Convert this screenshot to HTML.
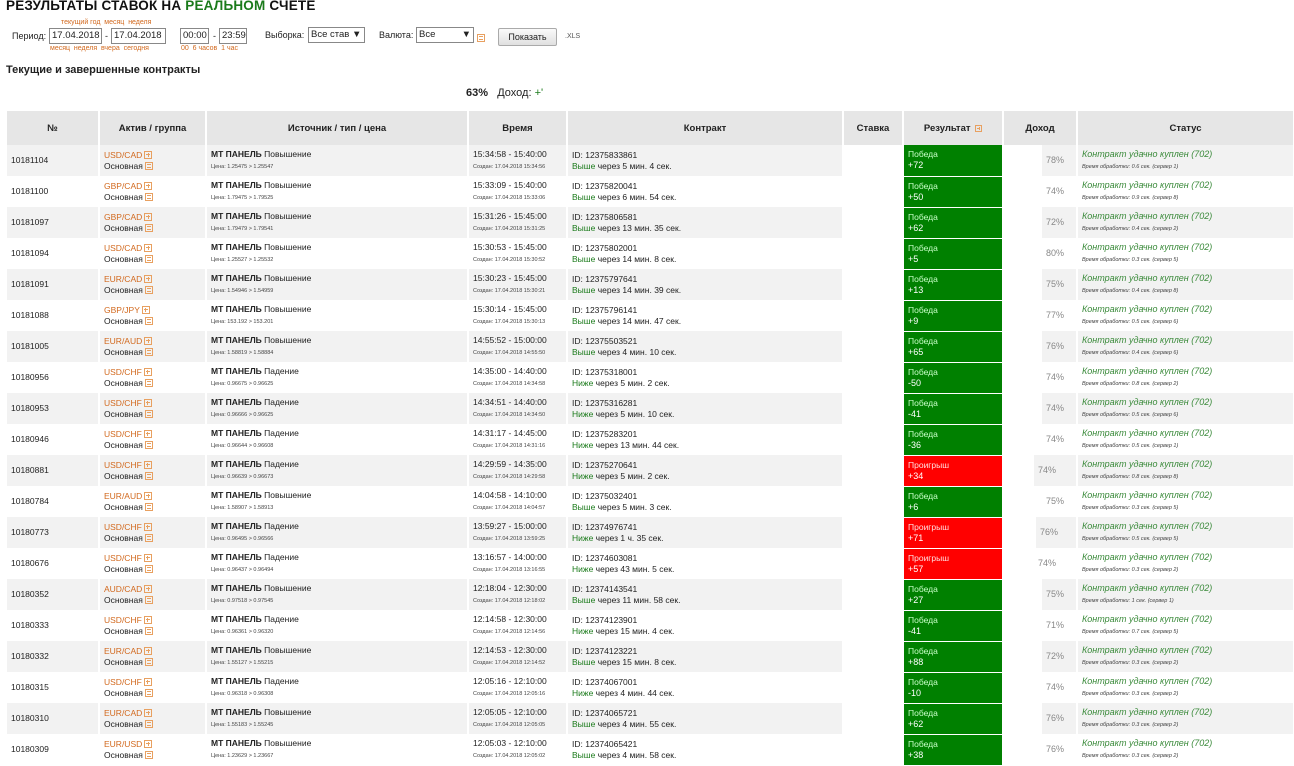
<!DOCTYPE html>
<html><head><meta charset="utf-8">
<style>
*{margin:0;padding:0;box-sizing:border-box}
body{width:1294px;height:763px;overflow:hidden;background:#fff;font-family:"Liberation Sans",Arial,sans-serif;color:#222;position:relative}
.abs{position:absolute;white-space:nowrap}
h1{position:absolute;left:6px;top:-2px;font-size:13.5px;font-weight:bold;color:#111;letter-spacing:0.2px}
h1 span{color:#1a7a1a}
.inp{position:absolute;height:16px;border:1px solid #888;background:#fff;font-size:9.5px;padding:1px 2px;line-height:12px}
.or{color:#d2691e;font-size:7px}
.btn{position:absolute;left:498px;top:28px;width:59px;height:18px;border:1px solid #aaa;border-radius:2px;background:linear-gradient(#fafafa,#e0e0e0);font-size:9px;text-align:center;line-height:16px}
table{position:absolute;left:7px;top:111px;border-collapse:collapse;table-layout:fixed;width:1287px}
th{height:34px;background:#e6e6e6;font-size:9.5px;font-weight:bold;border-right:2px solid #fff;color:#222}
td{height:31px;font-size:8.5px;line-height:11px;vertical-align:middle;padding:0 3px 0 4px;border-right:2px solid #fff;white-space:nowrap;overflow:hidden}
tr.g td{background:#f2f2f2}
td.s{background:#fff!important}
td.w{background:#008000!important;color:#c8ffc8;border-bottom:1px solid #fff}
td.l{background:#ff0000!important;color:#ffe0e0;border-bottom:1px solid #fff}
td.w b,td.l b{font-weight:normal;color:#fff;font-size:9px}
td.d{padding:0;position:relative;color:#888;font-size:9px}
td.d i{position:absolute;left:0;top:0;width:38px;height:31px;background:#fff}
td.d span{position:absolute;left:42px;top:10px}
.a{color:#d2691e}
.ic,.ip{display:inline-block;width:8px;height:8px;border:1px solid #e8a060;margin-left:2px;vertical-align:-1px;position:relative;background:transparent}
.ic:before{content:"";position:absolute;left:1px;right:1px;top:1px;height:1px;background:#e8a060}
.ic:after{content:"";position:absolute;left:1px;right:1px;top:4px;height:1px;background:#e8a060}
.ip:before{content:"";position:absolute;left:1px;right:1px;top:2.5px;height:1px;background:#e8a060}
.ip:after{content:"";position:absolute;top:1px;bottom:1px;left:2.5px;width:1px;background:#e8a060}
.sm{font-size:5.5px;color:#444}
.gr{color:#1a7a1a}
.st{color:#3a8a3a;font-style:italic;font-size:9px}
.st2{font-style:italic;font-size:5.5px;color:#444}
</style></head><body>
<h1>РЕЗУЛЬТАТЫ СТАВОК НА <span>РЕАЛЬНОМ</span> СЧЕТЕ</h1>
<div class="abs or" style="left:61px;top:19px">текущий год &nbsp;месяц &nbsp;неделя</div>
<div class="abs" style="left:12px;top:31px;font-size:9px">Период:</div>
<div class="inp" style="left:49px;top:28px;width:53px">17.04.2018</div>
<div class="abs" style="left:105px;top:31px;font-size:9px">-</div>
<div class="inp" style="left:111px;top:28px;width:55px">17.04.2018</div>
<div class="abs or" style="left:50px;top:45px">месяц &nbsp;неделя &nbsp;вчера &nbsp;сегодня</div>
<div class="inp" style="left:180px;top:28px;width:29px">00:00</div>
<div class="abs" style="left:213px;top:31px;font-size:9px">-</div>
<div class="inp" style="left:219px;top:28px;width:28px">23:59</div>
<div class="abs or" style="left:181px;top:45px">00 &nbsp;6 часов &nbsp;1 час</div>
<div class="abs" style="left:265px;top:30px;font-size:9px">Выборка:</div>
<div class="inp" style="left:308px;top:27px;width:57px">Все став ▼</div>
<div class="abs" style="left:379px;top:30px;font-size:9px">Валюта:</div>
<div class="inp" style="left:416px;top:27px;width:58px">Все <span style="float:right">▼</span></div>
<div class="abs" style="left:475px;top:28px"><span class="ic"></span></div>
<div class="btn">Показать</div>
<div class="abs" style="left:565px;top:33px;font-size:7px;color:#555">.XLS</div>
<div class="abs" style="left:6px;top:64px;font-size:11px;font-weight:bold">Текущие и завершенные контракты</div>
<div class="abs" style="left:466px;top:87px;font-size:11px"><b>63%</b>&nbsp;&nbsp; Доход: <span class="gr">+'</span></div>

<table>
<colgroup><col style="width:92px"><col style="width:107px"><col style="width:262px"><col style="width:99px"><col style="width:276px"><col style="width:60px"><col style="width:100px"><col style="width:74px"><col style="width:217px"></colgroup>
<tr><th>№</th><th>Актив / группа</th><th>Источник / тип / цена</th><th>Время</th><th>Контракт</th><th>Ставка</th><th>Результат <span class="ip" style="width:7px;height:7px"></span></th><th>Доход</th><th>Статус</th></tr>

<tr class="g"><td>10181104</td><td><span class="a">USD/CAD</span><span class="ip"></span><br>Основная<span class="ic"></span></td><td><b>МТ ПАНЕЛЬ</b> Повышение<br><span class="sm">Цена: 1.25475 &gt; 1.25547</span></td><td>15:34:58 - 15:40:00<br><span class="sm">Создан: 17.04.2018 15:34:56</span></td><td>ID: 12375833861<br><span class="gr">Выше</span> через 5 мин. 4 сек.</td><td class="s"></td><td class="w">Победа<br><b>+72</b></td><td class="d"><i></i><span>78%</span></td><td><span class="st">Контракт удачно куплен (702)</span><br><span class="st2">Время обработки: 0.6 сек. (сервер 1)</span></td></tr>
<tr><td>10181100</td><td><span class="a">GBP/CAD</span><span class="ip"></span><br>Основная<span class="ic"></span></td><td><b>МТ ПАНЕЛЬ</b> Повышение<br><span class="sm">Цена: 1.79475 &gt; 1.79525</span></td><td>15:33:09 - 15:40:00<br><span class="sm">Создан: 17.04.2018 15:33:06</span></td><td>ID: 12375820041<br><span class="gr">Выше</span> через 6 мин. 54 сек.</td><td class="s"></td><td class="w">Победа<br><b>+50</b></td><td class="d"><i></i><span>74%</span></td><td><span class="st">Контракт удачно куплен (702)</span><br><span class="st2">Время обработки: 0.9 сек. (сервер 8)</span></td></tr>
<tr class="g"><td>10181097</td><td><span class="a">GBP/CAD</span><span class="ip"></span><br>Основная<span class="ic"></span></td><td><b>МТ ПАНЕЛЬ</b> Повышение<br><span class="sm">Цена: 1.79479 &gt; 1.79541</span></td><td>15:31:26 - 15:45:00<br><span class="sm">Создан: 17.04.2018 15:31:25</span></td><td>ID: 12375806581<br><span class="gr">Выше</span> через 13 мин. 35 сек.</td><td class="s"></td><td class="w">Победа<br><b>+62</b></td><td class="d"><i></i><span>72%</span></td><td><span class="st">Контракт удачно куплен (702)</span><br><span class="st2">Время обработки: 0.4 сек. (сервер 2)</span></td></tr>
<tr><td>10181094</td><td><span class="a">USD/CAD</span><span class="ip"></span><br>Основная<span class="ic"></span></td><td><b>МТ ПАНЕЛЬ</b> Повышение<br><span class="sm">Цена: 1.25527 &gt; 1.25532</span></td><td>15:30:53 - 15:45:00<br><span class="sm">Создан: 17.04.2018 15:30:52</span></td><td>ID: 12375802001<br><span class="gr">Выше</span> через 14 мин. 8 сек.</td><td class="s"></td><td class="w">Победа<br><b>+5</b></td><td class="d"><i></i><span>80%</span></td><td><span class="st">Контракт удачно куплен (702)</span><br><span class="st2">Время обработки: 0.3 сек. (сервер 5)</span></td></tr>
<tr class="g"><td>10181091</td><td><span class="a">EUR/CAD</span><span class="ip"></span><br>Основная<span class="ic"></span></td><td><b>МТ ПАНЕЛЬ</b> Повышение<br><span class="sm">Цена: 1.54946 &gt; 1.54959</span></td><td>15:30:23 - 15:45:00<br><span class="sm">Создан: 17.04.2018 15:30:21</span></td><td>ID: 12375797641<br><span class="gr">Выше</span> через 14 мин. 39 сек.</td><td class="s"></td><td class="w">Победа<br><b>+13</b></td><td class="d"><i></i><span>75%</span></td><td><span class="st">Контракт удачно куплен (702)</span><br><span class="st2">Время обработки: 0.4 сек. (сервер 8)</span></td></tr>
<tr><td>10181088</td><td><span class="a">GBP/JPY</span><span class="ip"></span><br>Основная<span class="ic"></span></td><td><b>МТ ПАНЕЛЬ</b> Повышение<br><span class="sm">Цена: 153.192 &gt; 153.201</span></td><td>15:30:14 - 15:45:00<br><span class="sm">Создан: 17.04.2018 15:30:13</span></td><td>ID: 12375796141<br><span class="gr">Выше</span> через 14 мин. 47 сек.</td><td class="s"></td><td class="w">Победа<br><b>+9</b></td><td class="d"><i></i><span>77%</span></td><td><span class="st">Контракт удачно куплен (702)</span><br><span class="st2">Время обработки: 0.5 сек. (сервер 6)</span></td></tr>
<tr class="g"><td>10181005</td><td><span class="a">EUR/AUD</span><span class="ip"></span><br>Основная<span class="ic"></span></td><td><b>МТ ПАНЕЛЬ</b> Повышение<br><span class="sm">Цена: 1.58819 &gt; 1.58884</span></td><td>14:55:52 - 15:00:00<br><span class="sm">Создан: 17.04.2018 14:55:50</span></td><td>ID: 12375503521<br><span class="gr">Выше</span> через 4 мин. 10 сек.</td><td class="s"></td><td class="w">Победа<br><b>+65</b></td><td class="d"><i></i><span>76%</span></td><td><span class="st">Контракт удачно куплен (702)</span><br><span class="st2">Время обработки: 0.4 сек. (сервер 6)</span></td></tr>
<tr><td>10180956</td><td><span class="a">USD/CHF</span><span class="ip"></span><br>Основная<span class="ic"></span></td><td><b>МТ ПАНЕЛЬ</b> Падение<br><span class="sm">Цена: 0.96675 &gt; 0.96625</span></td><td>14:35:00 - 14:40:00<br><span class="sm">Создан: 17.04.2018 14:34:58</span></td><td>ID: 12375318001<br><span class="gr">Ниже</span> через 5 мин. 2 сек.</td><td class="s"></td><td class="w">Победа<br><b>-50</b></td><td class="d"><i></i><span>74%</span></td><td><span class="st">Контракт удачно куплен (702)</span><br><span class="st2">Время обработки: 0.8 сек. (сервер 2)</span></td></tr>
<tr class="g"><td>10180953</td><td><span class="a">USD/CHF</span><span class="ip"></span><br>Основная<span class="ic"></span></td><td><b>МТ ПАНЕЛЬ</b> Падение<br><span class="sm">Цена: 0.96666 &gt; 0.96625</span></td><td>14:34:51 - 14:40:00<br><span class="sm">Создан: 17.04.2018 14:34:50</span></td><td>ID: 12375316281<br><span class="gr">Ниже</span> через 5 мин. 10 сек.</td><td class="s"></td><td class="w">Победа<br><b>-41</b></td><td class="d"><i></i><span>74%</span></td><td><span class="st">Контракт удачно куплен (702)</span><br><span class="st2">Время обработки: 0.5 сек. (сервер 6)</span></td></tr>
<tr><td>10180946</td><td><span class="a">USD/CHF</span><span class="ip"></span><br>Основная<span class="ic"></span></td><td><b>МТ ПАНЕЛЬ</b> Падение<br><span class="sm">Цена: 0.96644 &gt; 0.96608</span></td><td>14:31:17 - 14:45:00<br><span class="sm">Создан: 17.04.2018 14:31:16</span></td><td>ID: 12375283201<br><span class="gr">Ниже</span> через 13 мин. 44 сек.</td><td class="s"></td><td class="w">Победа<br><b>-36</b></td><td class="d"><i></i><span>74%</span></td><td><span class="st">Контракт удачно куплен (702)</span><br><span class="st2">Время обработки: 0.5 сек. (сервер 1)</span></td></tr>
<tr class="g"><td>10180881</td><td><span class="a">USD/CHF</span><span class="ip"></span><br>Основная<span class="ic"></span></td><td><b>МТ ПАНЕЛЬ</b> Падение<br><span class="sm">Цена: 0.96639 &gt; 0.96673</span></td><td>14:29:59 - 14:35:00<br><span class="sm">Создан: 17.04.2018 14:29:58</span></td><td>ID: 12375270641<br><span class="gr">Ниже</span> через 5 мин. 2 сек.</td><td class="s"></td><td class="l">Проигрыш<br><b>+34</b></td><td class="d"><i style="width:30px"></i><span style="left:34px">74%</span></td><td><span class="st">Контракт удачно куплен (702)</span><br><span class="st2">Время обработки: 0.8 сек. (сервер 8)</span></td></tr>
<tr><td>10180784</td><td><span class="a">EUR/AUD</span><span class="ip"></span><br>Основная<span class="ic"></span></td><td><b>МТ ПАНЕЛЬ</b> Повышение<br><span class="sm">Цена: 1.58907 &gt; 1.58913</span></td><td>14:04:58 - 14:10:00<br><span class="sm">Создан: 17.04.2018 14:04:57</span></td><td>ID: 12375032401<br><span class="gr">Выше</span> через 5 мин. 3 сек.</td><td class="s"></td><td class="w">Победа<br><b>+6</b></td><td class="d"><i></i><span>75%</span></td><td><span class="st">Контракт удачно куплен (702)</span><br><span class="st2">Время обработки: 0.3 сек. (сервер 5)</span></td></tr>
<tr class="g"><td>10180773</td><td><span class="a">USD/CHF</span><span class="ip"></span><br>Основная<span class="ic"></span></td><td><b>МТ ПАНЕЛЬ</b> Падение<br><span class="sm">Цена: 0.96495 &gt; 0.96566</span></td><td>13:59:27 - 15:00:00<br><span class="sm">Создан: 17.04.2018 13:59:25</span></td><td>ID: 12374976741<br><span class="gr">Ниже</span> через 1 ч. 35 сек.</td><td class="s"></td><td class="l">Проигрыш<br><b>+71</b></td><td class="d"><i style="width:32px"></i><span style="left:36px">76%</span></td><td><span class="st">Контракт удачно куплен (702)</span><br><span class="st2">Время обработки: 0.5 сек. (сервер 5)</span></td></tr>
<tr><td>10180676</td><td><span class="a">USD/CHF</span><span class="ip"></span><br>Основная<span class="ic"></span></td><td><b>МТ ПАНЕЛЬ</b> Падение<br><span class="sm">Цена: 0.96437 &gt; 0.96494</span></td><td>13:16:57 - 14:00:00<br><span class="sm">Создан: 17.04.2018 13:16:55</span></td><td>ID: 12374603081<br><span class="gr">Ниже</span> через 43 мин. 5 сек.</td><td class="s"></td><td class="l">Проигрыш<br><b>+57</b></td><td class="d"><i style="width:30px"></i><span style="left:34px">74%</span></td><td><span class="st">Контракт удачно куплен (702)</span><br><span class="st2">Время обработки: 0.3 сек. (сервер 2)</span></td></tr>
<tr class="g"><td>10180352</td><td><span class="a">AUD/CAD</span><span class="ip"></span><br>Основная<span class="ic"></span></td><td><b>МТ ПАНЕЛЬ</b> Повышение<br><span class="sm">Цена: 0.97518 &gt; 0.97545</span></td><td>12:18:04 - 12:30:00<br><span class="sm">Создан: 17.04.2018 12:18:02</span></td><td>ID: 12374143541<br><span class="gr">Выше</span> через 11 мин. 58 сек.</td><td class="s"></td><td class="w">Победа<br><b>+27</b></td><td class="d"><i></i><span>75%</span></td><td><span class="st">Контракт удачно куплен (702)</span><br><span class="st2">Время обработки: 1 сек. (сервер 1)</span></td></tr>
<tr><td>10180333</td><td><span class="a">USD/CHF</span><span class="ip"></span><br>Основная<span class="ic"></span></td><td><b>МТ ПАНЕЛЬ</b> Падение<br><span class="sm">Цена: 0.96361 &gt; 0.96320</span></td><td>12:14:58 - 12:30:00<br><span class="sm">Создан: 17.04.2018 12:14:56</span></td><td>ID: 12374123901<br><span class="gr">Ниже</span> через 15 мин. 4 сек.</td><td class="s"></td><td class="w">Победа<br><b>-41</b></td><td class="d"><i></i><span>71%</span></td><td><span class="st">Контракт удачно куплен (702)</span><br><span class="st2">Время обработки: 0.7 сек. (сервер 5)</span></td></tr>
<tr class="g"><td>10180332</td><td><span class="a">EUR/CAD</span><span class="ip"></span><br>Основная<span class="ic"></span></td><td><b>МТ ПАНЕЛЬ</b> Повышение<br><span class="sm">Цена: 1.55127 &gt; 1.55215</span></td><td>12:14:53 - 12:30:00<br><span class="sm">Создан: 17.04.2018 12:14:52</span></td><td>ID: 12374123221<br><span class="gr">Выше</span> через 15 мин. 8 сек.</td><td class="s"></td><td class="w">Победа<br><b>+88</b></td><td class="d"><i></i><span>72%</span></td><td><span class="st">Контракт удачно куплен (702)</span><br><span class="st2">Время обработки: 0.3 сек. (сервер 2)</span></td></tr>
<tr><td>10180315</td><td><span class="a">USD/CHF</span><span class="ip"></span><br>Основная<span class="ic"></span></td><td><b>МТ ПАНЕЛЬ</b> Падение<br><span class="sm">Цена: 0.96318 &gt; 0.96308</span></td><td>12:05:16 - 12:10:00<br><span class="sm">Создан: 17.04.2018 12:05:16</span></td><td>ID: 12374067001<br><span class="gr">Ниже</span> через 4 мин. 44 сек.</td><td class="s"></td><td class="w">Победа<br><b>-10</b></td><td class="d"><i></i><span>74%</span></td><td><span class="st">Контракт удачно куплен (702)</span><br><span class="st2">Время обработки: 0.3 сек. (сервер 2)</span></td></tr>
<tr class="g"><td>10180310</td><td><span class="a">EUR/CAD</span><span class="ip"></span><br>Основная<span class="ic"></span></td><td><b>МТ ПАНЕЛЬ</b> Повышение<br><span class="sm">Цена: 1.55183 &gt; 1.55245</span></td><td>12:05:05 - 12:10:00<br><span class="sm">Создан: 17.04.2018 12:05:05</span></td><td>ID: 12374065721<br><span class="gr">Выше</span> через 4 мин. 55 сек.</td><td class="s"></td><td class="w">Победа<br><b>+62</b></td><td class="d"><i></i><span>76%</span></td><td><span class="st">Контракт удачно куплен (702)</span><br><span class="st2">Время обработки: 0.3 сек. (сервер 2)</span></td></tr>
<tr><td>10180309</td><td><span class="a">EUR/USD</span><span class="ip"></span><br>Основная<span class="ic"></span></td><td><b>МТ ПАНЕЛЬ</b> Повышение<br><span class="sm">Цена: 1.23629 &gt; 1.23667</span></td><td>12:05:03 - 12:10:00<br><span class="sm">Создан: 17.04.2018 12:05:02</span></td><td>ID: 12374065421<br><span class="gr">Выше</span> через 4 мин. 58 сек.</td><td class="s"></td><td class="w">Победа<br><b>+38</b></td><td class="d"><i></i><span>76%</span></td><td><span class="st">Контракт удачно куплен (702)</span><br><span class="st2">Время обработки: 0.3 сек. (сервер 2)</span></td></tr>
</table>
</body></html>
